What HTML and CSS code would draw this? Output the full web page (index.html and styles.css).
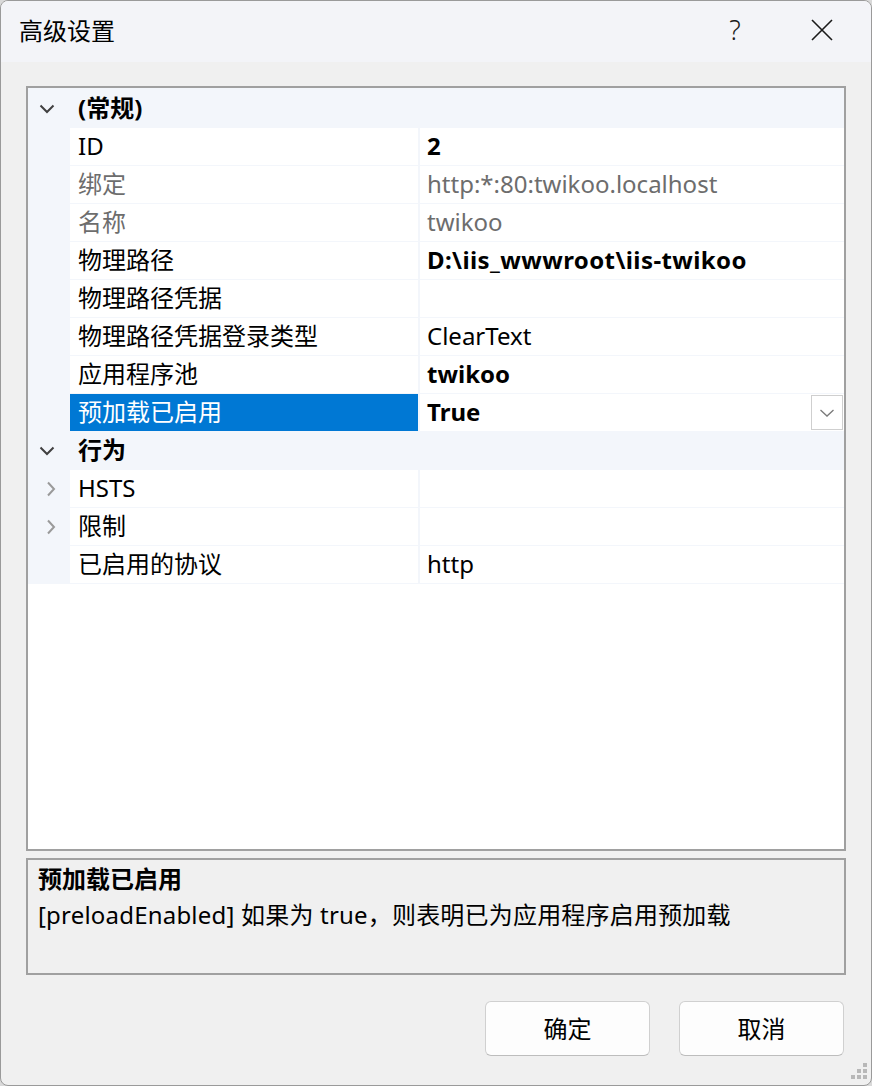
FILE: index.html
```html
<!DOCTYPE html>
<html lang="zh-CN">
<head>
<meta charset="utf-8">
<title>高级设置</title>
<link rel="stylesheet" href="styles.css">
</head>
<body>
<div class="dialog">
  <div class="titlebar">
    <span class="title">高级设置</span>
    <span class="tb-btn help">?</span>
    <span class="tb-btn close">
      <svg width="22" height="22" viewBox="0 0 22 22"><path d="M1 1 L21 21 M21 1 L1 21" stroke="#1a1a1a" stroke-width="1.6" fill="none"/></svg>
    </span>
  </div>
  <div class="content">
    <div class="grid">
      <div class="rows">
        <div class="cat">
          <span class="gut"><svg class="chev-down" width="16" height="10" viewBox="0 0 16 10"><path d="M1.5 1.5 L8 8 L14.5 1.5" stroke="#404040" stroke-width="2" fill="none"/></svg></span>
          <span class="cat-name">(常规)</span>
        </div>
        <div class="row"><span class="gut"></span><span class="lbl">ID</span><span class="val bold">2</span></div>
        <div class="row dim"><span class="gut"></span><span class="lbl">绑定</span><span class="val">http:*:80:twikoo.localhost</span></div>
        <div class="row dim"><span class="gut"></span><span class="lbl">名称</span><span class="val">twikoo</span></div>
        <div class="row"><span class="gut"></span><span class="lbl">物理路径</span><span class="val bold wide">D:\iis_wwwroot\iis-twikoo</span></div>
        <div class="row"><span class="gut"></span><span class="lbl">物理路径凭据</span><span class="val"></span></div>
        <div class="row"><span class="gut"></span><span class="lbl">物理路径凭据登录类型</span><span class="val">ClearText</span></div>
        <div class="row"><span class="gut"></span><span class="lbl">应用程序池</span><span class="val bold">twikoo</span></div>
        <div class="row selected"><span class="gut"></span><span class="lbl">预加载已启用</span><span class="val bold">True<span class="dd"><svg width="16" height="10" viewBox="0 0 16 10"><path d="M1.5 2 L8 8 L14.5 2" stroke="#7a7a7a" stroke-width="1.3" fill="none"/></svg></span></span></div>
        <div class="cat">
          <span class="gut"><svg class="chev-down" width="16" height="10" viewBox="0 0 16 10"><path d="M1.5 1.5 L8 8 L14.5 1.5" stroke="#404040" stroke-width="2" fill="none"/></svg></span>
          <span class="cat-name">行为</span>
        </div>
        <div class="row"><span class="gut"><svg width="10" height="16" viewBox="0 0 10 16"><path d="M2 1.5 L8 8 L2 14.5" stroke="#9a9a9a" stroke-width="2" fill="none"/></svg></span><span class="lbl">HSTS</span><span class="val"></span></div>
        <div class="row"><span class="gut"><svg width="10" height="16" viewBox="0 0 10 16"><path d="M2 1.5 L8 8 L2 14.5" stroke="#9a9a9a" stroke-width="2" fill="none"/></svg></span><span class="lbl">限制</span><span class="val"></span></div>
        <div class="row"><span class="gut"></span><span class="lbl">已启用的协议</span><span class="val">http</span></div>
      </div>
    </div>
    <div class="desc">
      <div class="desc-title">预加载已启用</div>
      <div class="desc-text">[preloadEnabled] 如果为 true，则表明已为应用程序启用预加载</div>
    </div>
    <div class="buttons">
      <button class="btn">确定</button>
      <button class="btn">取消</button>
    </div>
  </div>
  <svg class="grip" width="20" height="18" viewBox="0 0 20 18">
    <rect x="14" y="0" width="4" height="4" fill="#b8b8b8"/>
    <rect x="8" y="6" width="4" height="4" fill="#b8b8b8"/>
    <rect x="14" y="6" width="4" height="4" fill="#b8b8b8"/>
    <rect x="2" y="12" width="4" height="4" fill="#b8b8b8"/>
    <rect x="8" y="12" width="4" height="4" fill="#b8b8b8"/>
    <rect x="14" y="12" width="4" height="4" fill="#b8b8b8"/>
  </svg>
</div>
</body>
</html>
```
FILE: styles.css
```css
html, body {
  margin: 0;
  padding: 0;
  background: #d9d9d9;
}
body {
  font-family: "Noto Sans", "Noto Sans CJK SC", sans-serif;
  font-size: 24px;
  color: #000;
}
.dialog {
  position: relative;
  width: 872px;
  height: 1086px;
  box-sizing: border-box;
  border: 1px solid #9a9a9a;
  border-radius: 8px;
  background: #f0f0f0;
  overflow: hidden;
  display: flex;
  flex-direction: column;
}
.titlebar {
  height: 57px;
  flex: none;
  background: #f3f4f8;
  display: flex;
  align-items: center;
  padding-left: 18px;
  padding-bottom: 4px;
}
.title {
  font-family: "Noto Sans CJK SC", sans-serif;
  font-size: 24px;
  flex: 1;
  line-height: 1;
}
.tb-btn {
  display: flex;
  align-items: center;
  justify-content: center;
}
.help {
  width: 30px;
  margin-right: 61px;
  font-family: "Noto Sans", sans-serif;
  font-weight: 300;
  font-size: 27px;
  color: #1a1a1a;
  line-height: 1;
}
.close {
  width: 22px;
  margin-right: 38px;
}
.content {
  flex: 1;
  padding: 24px 25px 0 25px;
  display: flex;
  flex-direction: column;
}
.grid {
  height: 765px;
  flex: none;
  box-sizing: border-box;
  border: 2px solid #a0a0a0;
  background: #fff;
}
.rows {
  background: #f3f6fb;
  padding-top: 2px;
  padding-bottom: 1px;
  display: flex;
  flex-direction: column;
  gap: 1px;
}
.row, .cat {
  height: 37px;
  box-sizing: border-box;
  display: flex;
  align-items: stretch;
  line-height: 35px;
}
.gut {
  width: 42px;
  flex: none;
  display: flex;
  align-items: center;
  justify-content: center;
  padding-left: 3px;
  box-sizing: border-box;
}
.cat .gut {
  justify-content: flex-start;
  padding-left: 11px;
}
.cat-name {
  padding-left: 8px;
  padding-bottom: 2px;
  font-weight: 700;
}
.lbl {
  width: 348px;
  flex: none;
  background: #fff;
  padding-left: 8px;
  padding-bottom: 2px;
  box-sizing: border-box;
  white-space: nowrap;
}
.val {
  flex: 1;
  margin-left: 2px;
  background: #fff;
  padding-left: 7px;
  padding-bottom: 2px;
  white-space: nowrap;
  display: flex;
  align-items: center;
}
.bold {
  font-weight: 700;
}
.wide {
  letter-spacing: 0.4px;
}
.dim .lbl, .dim .val {
  color: #6d6d6d;
}
.selected .lbl {
  background: #0078d4;
  color: #fff;
}
.dd {
  margin-left: auto;
  margin-right: 1px;
  margin-bottom: -2px;
  width: 30px;
  height: 33px;
  border: 1px solid #cfcfcf;
  display: flex;
  align-items: center;
  justify-content: center;
  background: #fff;
}
.desc {
  margin-top: 7px;
  height: 117px;
  flex: none;
  box-sizing: border-box;
  border: 2px solid #a0a0a0;
  background: #f0f0f0;
  padding: 1px 10px;
  line-height: 36px;
}
.desc-title {
  font-weight: 700;
}
.desc-text {
  letter-spacing: 0.2px;
}
.buttons {
  margin-top: 26px;
  display: flex;
  justify-content: flex-end;
  gap: 29px;
  padding-right: 2px;
}
.btn {
  width: 165px;
  height: 55px;
  border: 1px solid #d0d0d0;
  border-bottom-color: #bdbdbd;
  border-radius: 6px;
  background: #fdfdfd;
  font-family: "Noto Sans CJK SC", sans-serif;
  font-size: 24px;
  color: #000;
  padding: 0 0 3px 0;
}
.grip {
  position: absolute;
  right: 2px;
  bottom: 4px;
}
```
